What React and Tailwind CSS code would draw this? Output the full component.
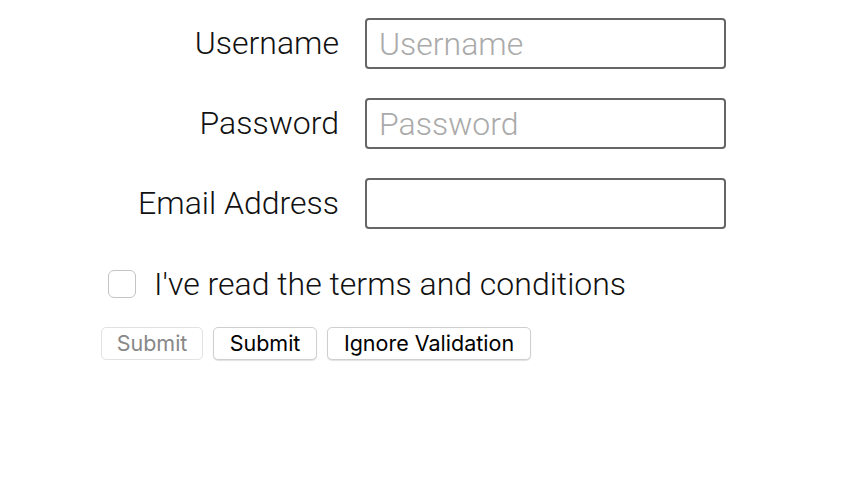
import React from 'react';

const Field = ({ label, placeholder, type = 'text' }) => (
  <div className="flex items-center h-[51px] mb-[29px]">
    <label className="w-[339px] text-right text-[32px] leading-[51px] font-light text-[#111]">{label}</label>
    <input
      type={type}
      placeholder={placeholder}
      className="ml-[26px] w-[361px] h-[51px] border-2 border-[#666] rounded-[4px] px-[12px] text-[32px] font-light placeholder:text-[#aaa] outline-none"
    />
  </div>
);

const Button = ({ children, disabled, width }) => (
  <button
    disabled={disabled}
    className={
      'h-[33px] border border-[#cfcfcf] rounded-[5px] bg-white text-[21.5px] leading-none shadow-[0_1px_1px_rgba(0,0,0,0.12)] ' +
      width +
      (disabled ? ' text-[#888] border-[#e2e2e2] shadow-none' : ' text-black')
    }
    style={{ fontFamily: 'Inter, "Liberation Sans", sans-serif' }}
  >
    {children}
  </button>
);

export default function App() {
  return (
    <div className="flex flex-col w-[860px] h-[494px] bg-white pt-[18px]" style={{ fontFamily: 'Roboto, "Noto Sans", sans-serif' }}>
      <Field label="Username" placeholder="Username" />
      <Field label="Password" placeholder="Password" type="password" />
      <Field label="Email Address" placeholder="" type="email" />
      <div className="flex items-center h-[28px] mt-[12px] ml-[108px]">
        <span className="w-[28px] h-[28px] border border-[#c4c4c4] rounded-[6px] bg-white"></span>
        <span className="ml-[18px] text-[32px] leading-[28px] font-light text-[#111]">I've read the terms and conditions</span>
      </div>
      <div className="flex gap-[10px] ml-[101px] mt-[29px]">
        <Button disabled width="w-[102px]">Submit</Button>
        <Button width="w-[104px]">Submit</Button>
        <Button width="w-[204px]">Ignore Validation</Button>
      </div>
    </div>
  );
}
